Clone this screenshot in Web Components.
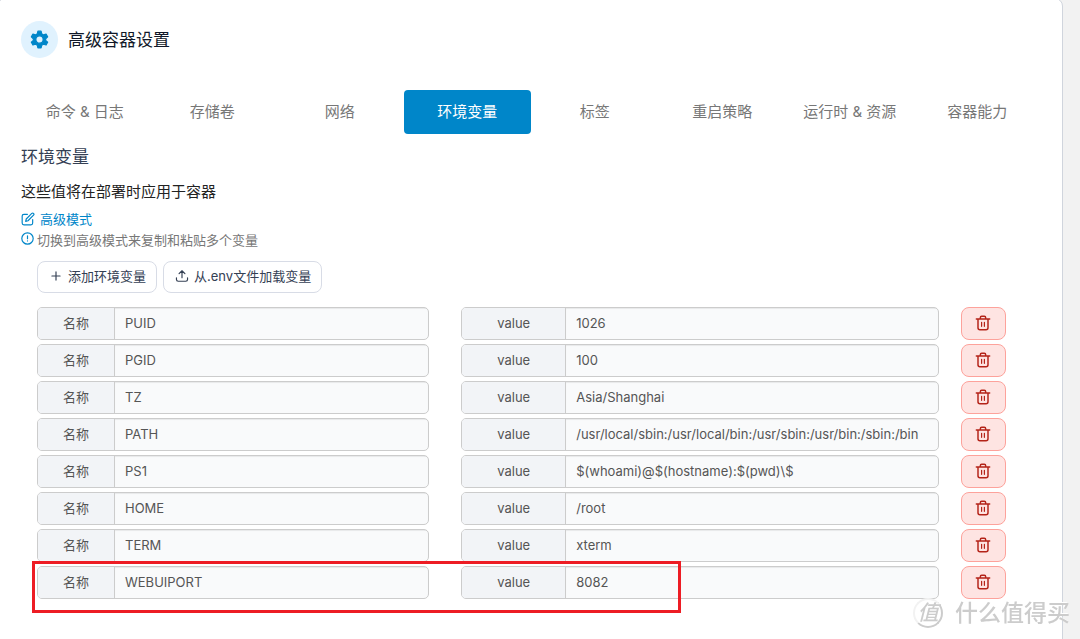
<!DOCTYPE html>
<html lang="zh-CN">
<head>
<meta charset="utf-8">
<title>高级容器设置</title>
<style>
html, body { margin: 0; min-height: 100%; }
body {
  background: #f2f2f2;
  color: #344054;
  font: 400 13px/20px Inter, "Noto Sans CJK SC", sans-serif;
  overflow-x: hidden;
}
</style>
</head>
<body>
<container-settings></container-settings>

<script>
const icons = {
  gear: '<svg viewBox="0 0 24 24" fill="currentColor" stroke="currentColor" stroke-width="1.5" stroke-linejoin="round"><path fill-rule="evenodd" d="M10 1.500h4l.8 3.400 2.200 1.300 3.300-1 2 3.500-2.500 2.300v2.200l2.500 2.300-2 3.500-3.300-1-2.200 1.300-.8 3.400h-4l-.8-3.400L7 18l-3.300 1-2-3.500 2.500-2.300V11L1.700 8.700l2-3.500 3.300 1 2.200-1.300zM12 7.400a4.600 4.600 0 1 0 0 9.200 4.600 4.600 0 0 0 0-9.200z"/></svg>',
  edit: '<svg viewBox="0 0 24 24" fill="none" stroke="currentColor" stroke-width="2" stroke-linecap="round" stroke-linejoin="round"><path d="M11 4H5a3 3 0 0 0-3 3v12a3 3 0 0 0 3 3h12a3 3 0 0 0 3-3v-6"/><path d="M18.500 2.500a2.100 2.100 0 0 1 3 3L12 15l-4 1 1-4z"/></svg>',
  info: '<svg viewBox="0 0 24 24" fill="none" stroke="currentColor" stroke-width="2.200" stroke-linecap="round"><circle cx="12" cy="12" r="10.500"/><path d="M12 7v5.500M12 16.500v.1"/></svg>',
  plus: '<svg viewBox="0 0 24 24" fill="none" stroke="currentColor" stroke-width="2" stroke-linecap="round"><path d="M12 5v14M5 12h14"/></svg>',
  upload: '<svg viewBox="0 0 24 24" fill="none" stroke="currentColor" stroke-width="2" stroke-linecap="round" stroke-linejoin="round"><path d="M2.500 15v3a3 3 0 0 0 3 3h13a3 3 0 0 0 3-3v-3M12 15V3M7 8l5-5 5 5"/></svg>',
  trash: '<svg viewBox="0 0 24 24" fill="none" stroke="currentColor" stroke-linecap="round" stroke-linejoin="round"><path stroke-width="2.200" d="M2 6h20M4.500 6v13a3 3 0 0 0 3 3h9a3 3 0 0 0 3-3V6M8 6V4a2 2 0 0 1 2-2h4a2 2 0 0 1 2 2v2"/><path stroke-width="1.800" d="M9.900 11v6M14.100 11v6"/></svg>'
};

function define(name, html, setup) {
  customElements.define(name, class extends HTMLElement {
    constructor() {
      super();
      this.attachShadow({ mode: 'open' }).innerHTML = html;
    }
    connectedCallback() {
      if (setup) setup(this, this.shadowRoot);
    }
  });
}

define('ui-icon', `
<style>
  :host { display: inline-block; flex: none; width: var(--icon-size, 14px); height: var(--icon-size, 14px); }
  svg { display: block; width: 100%; height: 100%; }
</style><span></span>`, (el, root) => {
  root.querySelector('span').innerHTML = icons[el.getAttribute('name')];
});

define('card-title', `
<style>
  :host { display: flex; align-items: center; gap: 10px; color: #101828; }
  .badge { display: grid; place-items: center; width: 37px; height: 37px; border-radius: 50%; background: #e0f2fe; color: #0086c9; --icon-size: 19px; }
  h1 { margin: 0; font-size: 17px; line-height: 24px; font-weight: inherit; }
</style>
<span class="badge"><ui-icon name="gear"></ui-icon></span><h1><slot></slot></h1>`);

define('tab-item', `
<style>
  :host { display: block; flex: 1 1 0; min-width: 0; }
  button { width: 100%; padding: 10px 0; border: 0; border-radius: 4px; background: none; color: #777; font: inherit; font-size: 15px; line-height: 24px; white-space: nowrap; cursor: pointer; }
  :host([active]) button { background: #0086c9; color: #fff; }
</style>
<button type="button" role="tab"><slot></slot></button>`, (el, root) => {
  root.querySelector('button').setAttribute('aria-selected', el.hasAttribute('active'));
});

define('tab-bar', `
<style>:host { display: flex; }</style><slot></slot>`, el => el.setAttribute('role', 'tablist'));

define('outline-button', `
<style>
  :host { display: block; }
  button { display: flex; align-items: center; gap: 5px; height: 32px; padding: 0 10px 2px 11px; border: 1px solid #d8dce6; border-radius: 8px; background: #fff; color: #344054; font: inherit; white-space: nowrap; cursor: pointer; }
</style>
<button type="button"><slot name="icon"></slot><span><slot></slot></span></button>`);

define('labelled-input', `
<style>
  :host { display: flex; height: 33px; box-sizing: border-box; border: 1px solid #ccc; border-radius: 5px; background: #f9fafb; overflow: hidden; color: #555; }
  label { flex: none; box-sizing: border-box; width: var(--label-width); border-right: 1px solid #ccc; background: #f2f4f7; text-align: center; line-height: 31px; }
  input { flex: 1; min-width: 0; padding: 0 10px 1px; border: 0; outline: 0; background: none; box-shadow: inset 0 1px 1px rgba(0,0,0,.07); color: inherit; font: inherit; }
</style>
<label for="field"></label><input id="field" type="text">`, (el, root) => {
  root.querySelector('label').textContent = el.getAttribute('label');
  root.querySelector('input').value = el.getAttribute('value');
});

define('env-row', `
<style>
  :host { display: flex; position: relative; }
  .name { flex: 392 1 0; margin-right: 32px; --label-width: 77px; }
  .value { flex: 478 1 0; margin-right: 22px; --label-width: 104px; }
  button { display: grid; place-items: center; flex: none; width: 45px; height: 33px; padding: 0 1px 1px 0; border: 1px solid #fda29b; border-radius: 8px; background: #fee4e2; color: #b42318; cursor: pointer; --icon-size: 16px; }
  .mark { display: none; }
  :host([highlight]) .mark { display: block; position: absolute; top: -5px; left: -5px; width: 67%; height: 52px; box-sizing: border-box; border: 3px solid #ed1c24; pointer-events: none; }
</style>
<labelled-input class="name" label="名称"></labelled-input>
<labelled-input class="value" label="value"></labelled-input>
<button type="button" aria-label="删除"><ui-icon name="trash"></ui-icon></button>
<span class="mark"></span>`, (el, root) => {
  for (const part of ['name', 'value']) {
    const field = root.querySelector('.' + part);
    field.shadowRoot.querySelector('input').value = el.getAttribute(part);
    field.setAttribute('value', el.getAttribute(part));
  }
});

define('site-watermark', `
<style>
  :host { position: fixed; right: 10px; bottom: 9px; display: flex; align-items: center; gap: 12px; color: #ccc; font-size: 23px; line-height: 34px; font-weight: 500; text-shadow: -1px -1px 0 #fff; pointer-events: none; }
  .seal { box-sizing: border-box; width: 30px; height: 30px; border: 2px solid #ccc; border-left-color: #f2f2f2; border-top-color: #f2f2f2; border-radius: 50%; background: rgba(255,255,255,.7); text-align: center; font-size: 21px; line-height: 25px; font-style: italic; }
</style>
<span class="seal">值</span><span>什么值得买</span>`);

define('container-settings', `
<style>
  :host { display: block; }
  main { box-sizing: border-box; min-height: calc(100vh + 20px); margin: -2px 17px -18px -3px; padding: 22px 21px 24px 23px; border: 1px solid #d0d5dd; border-radius: 8px; background: #fff; }
  tab-bar { margin-top: 32px; }
  h2 { margin: 11px 0 0; font-size: 17px; line-height: 24px; font-weight: inherit; }
  p { margin: 0; }
  .lead { margin-top: 11px; color: #222; font-size: 15px; line-height: 24px; }
  .mode { display: flex; align-items: center; gap: 5px; width: max-content; margin-top: 5px; color: #0086c9; text-decoration: none; }
  .mode ui-icon { --icon-size: 14px; }
  .hint { display: flex; gap: 3px; color: #777; line-height: 22px; }
  .hint ui-icon { --icon-size: 13px; margin-top: 3px; color: #0086c9; }
  .body { margin: 10px 35px 0 16px; }
  .actions { display: flex; gap: 6px; }
  .rows { display: grid; gap: 4px; margin-top: 14px; }
</style>
<main>
  <card-title>高级容器设置</card-title>
  <tab-bar>
    <tab-item>命令 &amp; 日志</tab-item>
    <tab-item>存储卷</tab-item>
    <tab-item>网络</tab-item>
    <tab-item active>环境变量</tab-item>
    <tab-item>标签</tab-item>
    <tab-item>重启策略</tab-item>
    <tab-item>运行时 &amp; 资源</tab-item>
    <tab-item>容器能力</tab-item>
  </tab-bar>
  <h2>环境变量</h2>
  <p class="lead">这些值将在部署时应用于容器</p>
  <a class="mode" href="#advanced"><ui-icon name="edit"></ui-icon>高级模式</a>
  <p class="hint"><ui-icon name="info"></ui-icon>切换到高级模式来复制和粘贴多个变量</p>
  <div class="body">
    <div class="actions">
      <outline-button><ui-icon slot="icon" name="plus"></ui-icon>添加环境变量</outline-button>
      <outline-button><ui-icon slot="icon" name="upload"></ui-icon>从.env文件加载变量</outline-button>
    </div>
    <div class="rows">
      <env-row name="PUID" value="1026"></env-row>
      <env-row name="PGID" value="100"></env-row>
      <env-row name="TZ" value="Asia/Shanghai"></env-row>
      <env-row name="PATH" value="/usr/local/sbin:/usr/local/bin:/usr/sbin:/usr/bin:/sbin:/bin"></env-row>
      <env-row name="PS1" value="$(whoami)@$(hostname):$(pwd)\\$"></env-row>
      <env-row name="HOME" value="/root"></env-row>
      <env-row name="TERM" value="xterm"></env-row>
      <env-row name="WEBUIPORT" value="8082" highlight></env-row>
    </div>
  </div>
</main>
<site-watermark></site-watermark>`);
</script>
</body>
</html>
